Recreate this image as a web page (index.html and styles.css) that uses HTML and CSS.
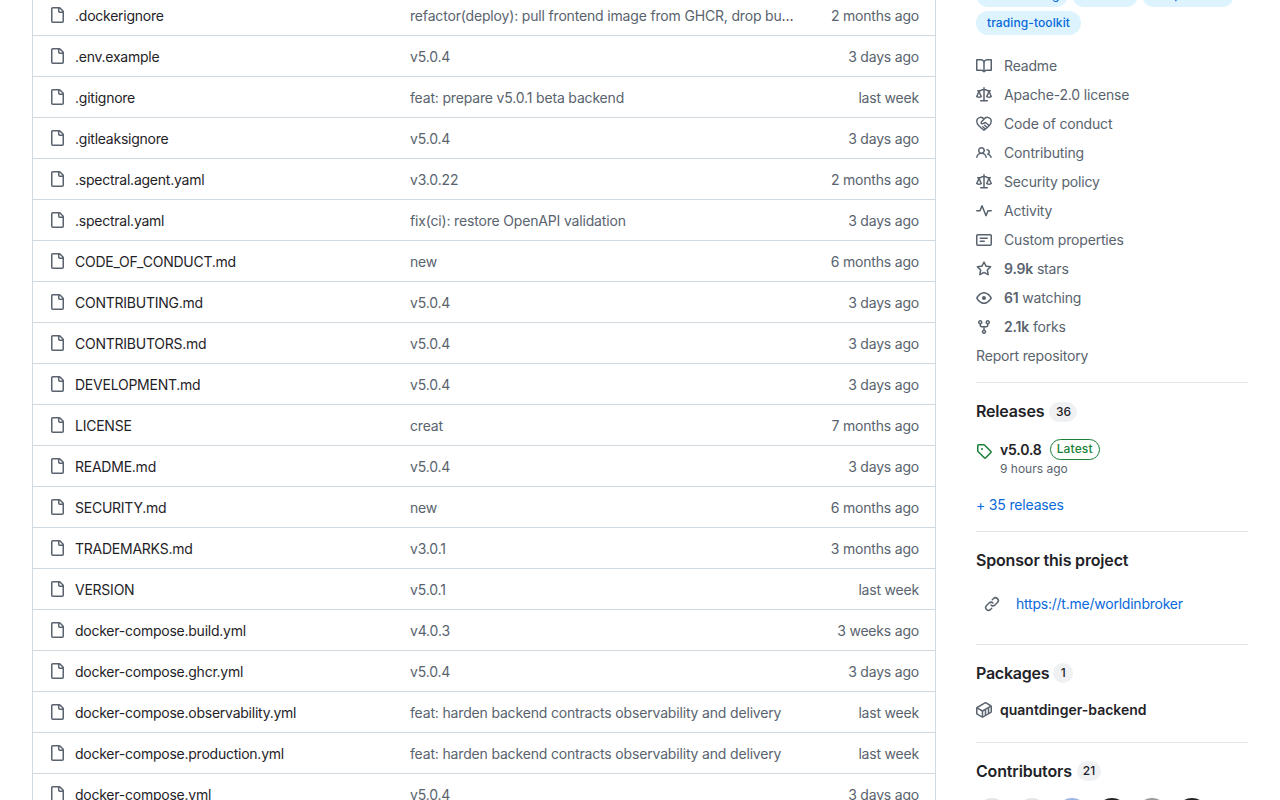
FILE: index.html
```
<!DOCTYPE html>
<html lang="en">
  <head>
    <meta charset="utf-8">
    <title>QuantDinger</title>
    <link rel="stylesheet" href="styles.css">
  </head>
  <body>
    <svg class="sprite" width="0" height="0">
      <symbol id="file" viewBox="0 0 16 16"><path d="M2 1.75C2 .784 2.784 0 3.75 0h6.586c.464 0 .909.184 1.237.513l2.914 2.914c.329.328.513.773.513 1.237v9.586A1.75 1.75 0 0 1 13.25 16h-9.5A1.75 1.75 0 0 1 2 14.25Zm1.75-.25a.25.25 0 0 0-.25.25v12.5c0 .138.112.25.25.25h9.5a.25.25 0 0 0 .25-.25V6h-2.75A1.75 1.75 0 0 1 9 4.25V1.5Zm6.75.062V4.25c0 .138.112.25.25.25h2.688l-.011-.013-2.914-2.914-.013-.011Z"/></symbol>
      <symbol id="law" viewBox="0 0 16 16"><path d="M8.75.75V2h.985c.304 0 .603.08.867.231l1.29.736c.038.022.08.033.124.033h2.234a.75.75 0 0 1 0 1.5h-.427l2.111 4.692a.75.75 0 0 1-.154.838l-.53-.53.529.531-.001.002-.002.002-.006.006-.006.005-.01.01-.045.04c-.21.176-.441.327-.686.45C14.556 10.78 13.88 11 13 11a4.498 4.498 0 0 1-2.023-.454 3.544 3.544 0 0 1-.686-.45l-.045-.04-.016-.015-.006-.006-.004-.004v-.001a.75.75 0 0 1-.154-.838L12.178 4.5h-.162c-.305 0-.604-.079-.868-.231l-1.29-.736a.245.245 0 0 0-.124-.033H8.75V13h2.5a.75.75 0 0 1 0 1.5h-6.5a.75.75 0 0 1 0-1.5h2.5V3.5h-.984a.245.245 0 0 0-.124.033l-1.289.737c-.265.15-.564.23-.869.23h-.162l2.112 4.692a.75.75 0 0 1-.154.838l-.53-.53.529.531-.001.002-.002.002-.006.006-.016.015-.045.04c-.21.176-.441.327-.686.45C4.556 10.78 3.88 11 3 11a4.498 4.498 0 0 1-2.023-.454 3.544 3.544 0 0 1-.686-.45l-.045-.04-.016-.015-.006-.006-.004-.004v-.001a.75.75 0 0 1-.154-.838L2.178 4.5H1.75a.75.75 0 0 1 0-1.5h2.234a.249.249 0 0 0 .125-.033l1.288-.737c.265-.15.564-.23.869-.23h.984V.75a.75.75 0 0 1 1.5 0Zm2.945 8.477c.285.135.718.273 1.305.273s1.02-.138 1.305-.273L13 6.327Zm-10 0c.285.135.718.273 1.305.273s1.02-.138 1.305-.273L3 6.327Z"/></symbol>
    </svg>

    <div class="layout">
      <main class="files" id="files"></main>

      <aside class="sidebar">
        <div class="topics">
          <a class="topic wide">auto-trading</a>
          <a class="topic">finance</a>
          <a class="topic wide">deepseek-r1</a>
          <a class="topic">trading-toolkit</a>
        </div>

        <ul class="about">
          <li><svg class="icon" viewBox="0 0 16 16"><path d="M0 1.75A.75.75 0 0 1 .75 1h4.253c1.227 0 2.317.59 3 1.501A3.743 3.743 0 0 1 11.006 1h4.245a.75.75 0 0 1 .75.75v10.5a.75.75 0 0 1-.75.75h-4.507a2.25 2.25 0 0 0-1.591.659l-.622.621a.75.75 0 0 1-1.06 0l-.622-.621A2.25 2.25 0 0 0 5.258 13H.75a.75.75 0 0 1-.75-.75Zm7.251 10.324.004-5.073-.002-2.253A2.25 2.25 0 0 0 5.003 2.5H1.5v9h3.757a3.75 3.75 0 0 1 1.994.574ZM8.755 4.75l-.004 7.322a3.752 3.752 0 0 1 1.992-.572H14.5v-9h-3.495a2.25 2.25 0 0 0-2.25 2.25Z"/></svg><span>Readme</span></li>
          <li><svg class="icon"><use href="#law"/></svg><span>Apache-2.0 license</span></li>
          <li><svg class="icon line" viewBox="0 0 16 16"><path d="M8 14.2C4.3 11.5.8 8.9.8 5.5A3.9 3.9 0 0 1 8 3.2a3.9 3.9 0 0 1 7.2 2.3c0 3.4-3.5 6-7.2 8.7ZM8 3.2 5.3 6.1c-.5.6 0 1.6 1 1.6 1.5 0 2-1.2 3.2-1.2l3.5 3M8.6 9.2l2.2 2M6.8 10.7l1.9 1.7"/></svg><span>Code of conduct</span></li>
          <li><svg class="icon" viewBox="0 0 16 16"><path d="M2 5.5a3.5 3.5 0 1 1 5.898 2.549 5.508 5.508 0 0 1 3.034 4.084.75.75 0 1 1-1.482.235 4 4 0 0 0-7.9 0 .75.75 0 0 1-1.482-.236A5.507 5.507 0 0 1 3.102 8.05 3.493 3.493 0 0 1 2 5.5ZM11 4a3.001 3.001 0 0 1 2.22 5.018 5.01 5.01 0 0 1 2.56 3.012.749.749 0 0 1-.885.954.752.752 0 0 1-.549-.514 3.507 3.507 0 0 0-2.522-2.372.75.75 0 0 1-.574-.73v-.352a.75.75 0 0 1 .416-.672A1.5 1.5 0 0 0 11 5.5.75.75 0 0 1 11 4Zm-5.5-.5a2 2 0 1 0-.001 3.999A2 2 0 0 0 5.5 3.5Z"/></svg><span>Contributing</span></li>
          <li><svg class="icon"><use href="#law"/></svg><span>Security policy</span></li>
          <li><svg class="icon" viewBox="0 0 16 16"><path d="M6 2c.306 0 .582.187.696.471L10 10.731l1.304-3.26A.751.751 0 0 1 12 7h3.25a.75.75 0 0 1 0 1.5h-2.742l-1.812 4.528a.751.751 0 0 1-1.392 0L6 4.77 4.696 8.03A.75.75 0 0 1 4 8.5H.75a.75.75 0 0 1 0-1.5h2.742l1.812-4.529A.751.751 0 0 1 6 2Z"/></svg><span>Activity</span></li>
          <li><svg class="icon" viewBox="0 0 16 16"><path d="M0 3.75C0 2.784.784 2 1.75 2h12.5c.966 0 1.75.784 1.75 1.75v8.5A1.75 1.75 0 0 1 14.25 14H1.75A1.75 1.75 0 0 1 0 12.25Zm1.75-.25a.25.25 0 0 0-.25.25v8.5c0 .138.112.25.25.25h12.5a.25.25 0 0 0 .25-.25v-8.5a.25.25 0 0 0-.25-.25ZM3.5 6.25a.75.75 0 0 1 .75-.75h7a.75.75 0 0 1 0 1.5h-7a.75.75 0 0 1-.75-.75Zm.75 2.25h4a.75.75 0 0 1 0 1.5h-4a.75.75 0 0 1 0-1.5Z"/></svg><span>Custom properties</span></li>
          <li><svg class="icon" viewBox="0 0 16 16"><path d="M8 .25a.75.75 0 0 1 .673.418l1.882 3.815 4.21.612a.75.75 0 0 1 .416 1.279l-3.046 2.97.719 4.192a.751.751 0 0 1-1.088.791L8 12.347l-3.766 1.98a.75.75 0 0 1-1.088-.79l.72-4.194L.818 6.374a.75.75 0 0 1 .416-1.28l4.21-.611L7.327.668A.75.75 0 0 1 8 .25Zm0 2.445L6.615 5.5a.75.75 0 0 1-.564.41l-3.097.45 2.24 2.184a.75.75 0 0 1 .216.664l-.528 3.084 2.769-1.456a.75.75 0 0 1 .698 0l2.77 1.456-.53-3.084a.75.75 0 0 1 .216-.664l2.24-2.183-3.096-.45a.75.75 0 0 1-.564-.41L8 2.694Z"/></svg><span><b>9.9k</b> stars</span></li>
          <li><svg class="icon" viewBox="0 0 16 16"><path d="M8 2c1.981 0 3.671.992 4.933 2.078 1.27 1.091 2.187 2.345 2.637 3.023a1.62 1.62 0 0 1 0 1.798c-.45.678-1.367 1.932-2.637 3.023C11.67 13.008 9.981 14 8 14c-1.981 0-3.671-.992-4.933-2.078C1.797 10.83.88 9.576.43 8.898a1.62 1.62 0 0 1 0-1.798c.45-.677 1.367-1.931 2.637-3.022C4.33 2.992 6.019 2 8 2ZM1.679 7.932a.12.12 0 0 0 0 .136c.411.622 1.241 1.75 2.366 2.717C5.176 11.758 6.527 12.5 8 12.5c1.473 0 2.825-.742 3.955-1.715 1.124-.967 1.954-2.096 2.366-2.717a.12.12 0 0 0 0-.136c-.412-.621-1.242-1.75-2.366-2.717C10.824 4.242 9.473 3.5 8 3.5c-1.473 0-2.825.742-3.955 1.715-1.124.967-1.954 2.096-2.366 2.717ZM8 10a2 2 0 1 1-.001-3.999A2 2 0 0 1 8 10Z"/></svg><span><b>61</b> watching</span></li>
          <li><svg class="icon" viewBox="0 0 16 16"><path d="M5 5.372v.878c0 .414.336.75.75.75h4.5a.75.75 0 0 0 .75-.75v-.878a2.25 2.25 0 1 1 1.5 0v.878a2.25 2.25 0 0 1-2.25 2.25h-1.5v2.128a2.251 2.251 0 1 1-1.5 0V8.5h-1.5A2.25 2.25 0 0 1 3.5 6.25v-.878a2.25 2.25 0 1 1 1.5 0ZM5 3.25a.75.75 0 1 0-1.5 0 .75.75 0 0 0 1.5 0Zm6.75.75a.75.75 0 1 0 0-1.5.75.75 0 0 0 0 1.5Zm-3 8.75a.75.75 0 1 0-1.5 0 .75.75 0 0 0 1.5 0Z"/></svg><span><b>2.1k</b> forks</span></li>
          <li><span>Report repository</span></li>
        </ul>

        <section class="cell releases">
          <h2>Releases <span class="counter">36</span></h2>
          <div class="release">
            <svg class="icon green" viewBox="0 0 16 16"><path d="M1 7.775V2.75C1 1.784 1.784 1 2.75 1h5.025c.464 0 .91.184 1.238.513l6.25 6.25a1.75 1.75 0 0 1 0 2.474l-5.026 5.026a1.75 1.75 0 0 1-2.474 0l-6.25-6.25A1.752 1.752 0 0 1 1 7.775Zm1.5 0c0 .066.026.13.073.177l6.25 6.25a.25.25 0 0 0 .354 0l5.025-5.025a.25.25 0 0 0 0-.354l-6.25-6.25a.25.25 0 0 0-.177-.073H2.75a.25.25 0 0 0-.25.25ZM6 5a1 1 0 1 1 0 2 1 1 0 0 1 0-2Z"/></svg>
            <div>
              <div class="release-name"><b>v5.0.8</b><span class="latest">Latest</span></div>
              <div class="release-time">9 hours ago</div>
            </div>
          </div>
          <a class="more">+ 35 releases</a>
        </section>

        <section class="cell sponsor">
          <h2>Sponsor this project</h2>
          <div class="sponsor-link">
            <svg class="icon" viewBox="0 0 16 16"><path d="m7.775 3.275 1.25-1.25a3.5 3.5 0 1 1 4.95 4.95l-2.5 2.5a3.5 3.5 0 0 1-4.95 0 .751.751 0 0 1 .018-1.042.751.751 0 0 1 1.042-.018 1.998 1.998 0 0 0 2.83 0l2.5-2.5a2.002 2.002 0 0 0-2.83-2.83l-1.25 1.25a.751.751 0 0 1-1.042-.018.751.751 0 0 1-.018-1.042Zm-4.69 9.64a1.998 1.998 0 0 0 2.83 0l1.25-1.25a.751.751 0 0 1 1.042.018.751.751 0 0 1 .018 1.042l-1.25 1.25a3.5 3.5 0 1 1-4.95-4.95l2.5-2.5a3.5 3.5 0 0 1 4.95 0 .751.751 0 0 1-.018 1.042.751.751 0 0 1-1.042.018 1.998 1.998 0 0 0-2.83 0l-2.5 2.5a1.998 1.998 0 0 0 0 2.83Z"/></svg>
            <a>https://t.me/worldinbroker</a>
          </div>
        </section>

        <section class="cell packages">
          <h2>Packages <span class="counter">1</span></h2>
          <div class="package">
            <svg class="icon" viewBox="0 0 16 16"><path d="m10.41.24 4.711 2.774c.544.316.878.897.879 1.526v5.01a1.77 1.77 0 0 1-.88 1.53l-7.753 4.521-.002.001a1.767 1.767 0 0 1-1.774 0H5.59L.873 12.85A1.762 1.762 0 0 1 0 11.327V6.292c0-.304.078-.598.22-.855l.004-.005.01-.019c.15-.262.369-.486.64-.643L8.641.239a1.752 1.752 0 0 1 1.765 0l.002.001ZM9.397 1.534l-7.17 4.182 4.116 2.388a.27.27 0 0 0 .269 0l7.152-4.148-4.115-2.422a.252.252 0 0 0-.252 0Zm-7.768 10.02 4.1 2.393V9.474a1.807 1.807 0 0 1-.138-.072L1.5 7.029v4.298c0 .095.05.181.129.227Zm8.6.642 1.521-.887v-4.45l-1.521.882ZM7.365 9.402h.001c-.044.026-.09.049-.136.071v4.472l1.5-.875V8.61Zm5.885 1.032 1.115-.65h.002a.267.267 0 0 0 .133-.232V5.264l-1.25.725Z"/></svg>
            <b>quantdinger-backend</b>
          </div>
        </section>

        <section class="cell">
          <h2>Contributors <span class="counter">21</span></h2>
          <div class="avatars">
            <span class="avatar light"></span>
            <span class="avatar light"></span>
            <span class="avatar blue"></span>
            <span class="avatar dark"></span>
            <span class="avatar gray"></span>
            <span class="avatar dark"></span>
          </div>
        </section>
      </aside>
    </div>

    <script>
      const files = [
        [".dockerignore", "refactor(deploy): pull frontend image from GHCR, drop bundle", "2 months ago"],
        [".env.example", "v5.0.4", "3 days ago"],
        [".gitignore", "feat: prepare v5.0.1 beta backend", "last week"],
        [".gitleaksignore", "v5.0.4", "3 days ago"],
        [".spectral.agent.yaml", "v3.0.22", "2 months ago"],
        [".spectral.yaml", "fix(ci): restore OpenAPI validation", "3 days ago"],
        ["CODE_OF_CONDUCT.md", "new", "6 months ago"],
        ["CONTRIBUTING.md", "v5.0.4", "3 days ago"],
        ["CONTRIBUTORS.md", "v5.0.4", "3 days ago"],
        ["DEVELOPMENT.md", "v5.0.4", "3 days ago"],
        ["LICENSE", "creat", "7 months ago"],
        ["README.md", "v5.0.4", "3 days ago"],
        ["SECURITY.md", "new", "6 months ago"],
        ["TRADEMARKS.md", "v3.0.1", "3 months ago"],
        ["VERSION", "v5.0.1", "last week"],
        ["docker-compose.build.yml", "v4.0.3", "3 weeks ago"],
        ["docker-compose.ghcr.yml", "v5.0.4", "3 days ago"],
        ["docker-compose.observability.yml", "feat: harden backend contracts observability and delivery", "last week"],
        ["docker-compose.production.yml", "feat: harden backend contracts observability and delivery", "last week"],
        ["docker-compose.yml", "v5.0.4", "3 days ago"]
      ];

      // Render the file rows
      document.getElementById("files").innerHTML = files.map(([name, message, time]) => `
        <div class="row">
          <svg class="icon"><use href="#file"/></svg>
          <span class="name">${name}</span>
          <div class="message"><span>${message}</span></div>
          <span class="time">${time}</span>
        </div>`).join("");
    </script>
  </body>
</html>
```
FILE: styles.css
```
* {
  box-sizing: border-box;
}
body {
  margin: 0;
  height: 800px;
  overflow: hidden;
  background: #fff;
  color: #1f2328;
  font-family: Inter, "Liberation Sans", sans-serif;
  font-size: 14px;
  line-height: 21px;
  letter-spacing: -0.17px;
}
b {
  font-weight: 600;
}
a {
  color: #0969da;
}
.sprite {
  display: none;
}
.icon {
  flex: none;
  width: 16px;
  height: 16px;
  fill: #59636e;
}
.line {
  fill: none;
  stroke: #59636e;
  stroke-width: 1.4;
  stroke-linecap: round;
  stroke-linejoin: round;
}
.green {
  fill: #1a7f37;
}
.layout {
  display: flex;
  gap: 40px;
  height: 800px;
  padding: 0 32px;
  overflow: hidden;
}
.files {
  flex: none;
  width: 904px;
  height: 816px;
  border: solid #d1d9e0;
  border-width: 0 1px;
}
.row {
  display: grid;
  grid-template-columns: 16px 325px 385px 1fr;
  align-items: center;
  column-gap: 10px;
  height: 41px;
  padding: 1px 16px 0;
  border-bottom: 1px solid #d1d9e0;
}
.row:first-child {
  height: 36px;
  padding-top: 0;
  padding-bottom: 4px;
}
.row .icon {
  margin-top: -2px;
}
.name {
  letter-spacing: -0.24px;
}
.message {
  overflow: hidden;
  text-overflow: ellipsis;
  white-space: nowrap;
}
.message span {
  color: #59636e;
}
.time {
  text-align: right;
  color: #59636e;
  letter-spacing: -0.2px;
}
.sidebar {
  width: 272px;
}
.topics {
  display: flex;
  flex-wrap: wrap;
  gap: 4px;
  margin-top: -17px;
}
.topic {
  height: 24px;
  padding: 0 11px;
  border-radius: 12px;
  background: #ddf4ff;
  font-size: 12px;
  font-weight: 500;
  line-height: 24px;
  letter-spacing: 0.1px;
  white-space: nowrap;
}
.wide {
  width: 92px;
}
.about {
  margin: 20px 0 0;
  padding: 0 0 16px;
  list-style: none;
  color: #59636e;
}
.about li {
  display: flex;
  align-items: center;
  gap: 12px;
  height: 21px;
  margin-bottom: 8px;
}
.about li:last-child {
  margin-bottom: 0;
}
.cell {
  border-top: 1px solid #d1d9e0b3;
  padding-top: 16px;
}
h2 {
  display: flex;
  align-items: center;
  gap: 5px;
  height: 24px;
  margin: 0;
  font-size: 16px;
  font-weight: 600;
}
.counter {
  height: 20px;
  min-width: 20px;
  padding: 0 6px;
  border-radius: 10px;
  background: #eff1f3;
  font-size: 12px;
  font-weight: 500;
  line-height: 20px;
  letter-spacing: 0;
  text-align: center;
}
.releases {
  height: 149px;
}
.releases .counter {
  margin-top: 2px;
  padding: 0 6.5px;
}
.release {
  display: flex;
  gap: 8px;
  margin-top: 16px;
}
.release .icon {
  margin-top: 4px;
}
.release-name {
  display: flex;
  align-items: center;
  gap: 8px;
  height: 20px;
}
.latest {
  height: 21px;
  padding: 0 6px;
  border: 1px solid #1a7f37;
  border-radius: 11px;
  color: #1a7f37;
  font-size: 12px;
  font-weight: 500;
  line-height: 18px;
  letter-spacing: 0.15px;
}
.release-time {
  margin-top: 1px;
  color: #59636e;
  font-size: 12px;
  line-height: 18px;
  letter-spacing: 0;
}
.more {
  display: block;
  margin-top: 16px;
}
.sponsor {
  height: 113px;
}
.sponsor-link {
  display: flex;
  align-items: center;
  gap: 16px;
  margin-top: 21px;
  padding-left: 8px;
  letter-spacing: -0.23px;
}
.packages {
  height: 98px;
}
.packages h2 {
  gap: 4px;
  letter-spacing: -0.25px;
}
.package {
  display: flex;
  align-items: center;
  gap: 8px;
  margin-top: 14px;
  letter-spacing: 0;
}
.avatars {
  display: flex;
  gap: 8px;
  margin-top: 15px;
}
.avatar {
  width: 32px;
  height: 32px;
  border-radius: 50%;
}
.light {
  background: #e4e4e4;
}
.blue {
  background: #9ab4e0;
}
.gray {
  background: #999;
}
.dark {
  background: #222;
}
```
